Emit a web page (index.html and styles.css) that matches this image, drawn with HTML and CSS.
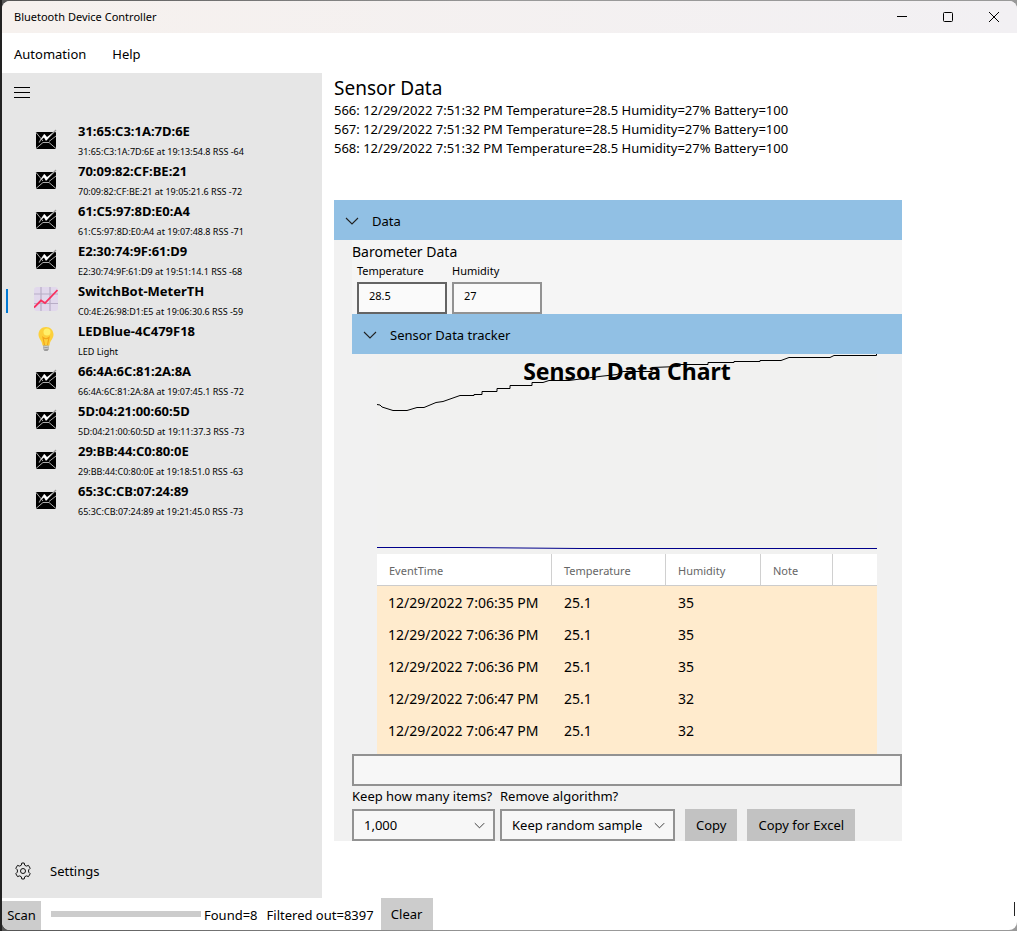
FILE: index.html
```html
<!DOCTYPE html>
<html lang="en">
<head>
<meta charset="utf-8">
<title>Bluetooth Device Controller</title>
<link rel="stylesheet" href="styles.css">
</head>
<body>
<svg class="defs" aria-hidden="true">
  <symbol id="device" viewBox="0 0 24 24">
    <rect x="2" y="5" width="20" height="17" rx="1" fill="#000"/>
    <path d="M2 5.500L9 14M22 9L15 14.500M2 21.500L9 15.500H15L22 21.500" fill="none" stroke="#aaa" stroke-width="1"/>
    <path d="M5 15.500L10 8L13 12L22 3" fill="none" stroke="#999" stroke-width="1.200"/>
    <path d="M6 13.500L10.500 7L13 10L19 5.500L12 14L10 10.500Z" fill="#fff"/>
  </symbol>
  <symbol id="chevron" viewBox="0 0 14 8"><path d="M1 1L7 7L13 1" fill="none" stroke="#222" stroke-width="1.100"/></symbol>
</svg>
<div class="window">
  <header class="titlebar">
    <span>Bluetooth Device Controller</span>
    <div class="caption">
      <button aria-label="Minimize"><svg width="12" height="12" viewBox="0 0 12 12"><path d="M1 5.500H11" stroke="#000"/></svg></button>
      <button aria-label="Maximize"><svg width="12" height="12" viewBox="0 0 12 12"><rect x="1.500" y="1.500" width="9" height="9" rx="1" fill="none" stroke="#000"/></svg></button>
      <button aria-label="Close"><svg width="12" height="12" viewBox="0 0 12 12"><path d="M1 1L11 11M11 1L1 11" stroke="#000"/></svg></button>
    </div>
  </header>
  <nav class="menubar"><button>Automation</button><button>Help</button></nav>
  <div class="workspace">
    <aside class="sidebar">
      <button class="burger" aria-label="Toggle navigation"><svg width="16" height="12" viewBox="0 0 16 12"><path d="M0 .5H16M0 5.500H16M0 10.500H16" stroke="#000"/></svg></button>
      <ul class="devices">
        <li><svg class="icon"><use href="#device"/></svg><div><strong>31:65:C3:1A:7D:6E</strong><small>31:65:C3:1A:7D:6E at 19:13:54.8 RSS -64</small></div></li>
        <li><svg class="icon"><use href="#device"/></svg><div><strong>70:09:82:CF:BE:21</strong><small>70:09:82:CF:BE:21 at 19:05:21.6 RSS -72</small></div></li>
        <li><svg class="icon"><use href="#device"/></svg><div><strong>61:C5:97:8D:E0:A4</strong><small>61:C5:97:8D:E0:A4 at 19:07:48.8 RSS -71</small></div></li>
        <li><svg class="icon"><use href="#device"/></svg><div><strong>E2:30:74:9F:61:D9</strong><small>E2:30:74:9F:61:D9 at 19:51:14.1 RSS -68</small></div></li>
        <li class="selected"><svg class="icon" viewBox="0 0 24 24"><rect width="24" height="24" rx="3" fill="#e1d8ec"/><path d="M7 0V24M16 0V24M0 7H24M0 16.500H24" stroke="#b8adc6" stroke-width="1.200"/><path d="M0 20.500L7 13.500L11 16L23.500 3" fill="none" stroke="#f8315f" stroke-width="1.800"/></svg><div><strong>SwitchBot-MeterTH</strong><small>C0:4E:26:98:D1:E5 at 19:06:30.6 RSS -59</small></div></li>
        <li><svg class="icon" viewBox="0 0 24 24"><path d="M9 18H15V22L13.500 24H10.500L9 22Z" fill="#9b9b9b"/><path d="M9 20L15 19M9 22L15 21" stroke="#ddd" stroke-width=".8"/><path d="M12 0C7.500 0 4.500 3.500 4.500 7.500C4.500 12 8 13 8.500 18.500H15.500C16 13 19.500 12 19.500 7.500C19.500 3.500 16.500 0 12 0Z" fill="#fcd03b"/><path d="M10.500 18L9 10.500Q12 13 15 10.500L13.500 18" fill="none" stroke="#f3a51b" stroke-width="1.200"/><circle cx="13" cy="5" r="3.500" fill="#fff06a"/></svg><div><strong>LEDBlue-4C479F18</strong><small>LED Light</small></div></li>
        <li><svg class="icon"><use href="#device"/></svg><div><strong>66:4A:6C:81:2A:8A</strong><small>66:4A:6C:81:2A:8A at 19:07:45.1 RSS -72</small></div></li>
        <li><svg class="icon"><use href="#device"/></svg><div><strong>5D:04:21:00:60:5D</strong><small>5D:04:21:00:60:5D at 19:11:37.3 RSS -73</small></div></li>
        <li><svg class="icon"><use href="#device"/></svg><div><strong>29:BB:44:C0:80:0E</strong><small>29:BB:44:C0:80:0E at 19:18:51.0 RSS -63</small></div></li>
        <li><svg class="icon"><use href="#device"/></svg><div><strong>65:3C:CB:07:24:89</strong><small>65:3C:CB:07:24:89 at 19:21:45.0 RSS -73</small></div></li>
      </ul>
      <button class="settings"><svg width="18" height="18" viewBox="0 0 18 18"><path d="M7.300 3.200L7.800 1H10.200L10.700 3.200L12.300 4.100L14.500 3.400L16.200 6.300L14.600 7.900V10.100L16.200 11.700L14.500 14.600L12.300 13.900L10.700 14.800L10.200 17H7.800L7.300 14.800L5.700 13.900L3.500 14.600L1.800 11.700L3.400 10.100V7.900L1.800 6.300L3.500 3.400L5.700 4.100Z" fill="none" stroke="#111" stroke-linejoin="round"/><circle cx="9" cy="9" r="2.500" fill="none" stroke="#111"/></svg>Settings</button>
    </aside>
    <main class="content">
      <h1>Sensor Data</h1>
      <div class="log">
        <p>566: 12/29/2022 7:51:32 PM Temperature=28.5 Humidity=27% Battery=100</p>
        <p>567: 12/29/2022 7:51:32 PM Temperature=28.5 Humidity=27% Battery=100</p>
        <p>568: 12/29/2022 7:51:32 PM Temperature=28.5 Humidity=27% Battery=100</p>
      </div>
      <section class="panel">
        <button class="expander"><svg class="chev"><use href="#chevron"/></svg>Data</button>
        <div class="panel-body">
          <div class="barometer">
            <h2>Barometer Data</h2>
            <div class="fields">
              <label>Temperature<input class="focus" value="28.5"></label>
              <label>Humidity<input value="27"></label>
            </div>
          </div>
          <button class="expander"><svg class="chev"><use href="#chevron"/></svg>Sensor Data tracker</button>
          <div class="tracker">
            <div class="chart">
              <h3>Sensor Data Chart</h3>
              <svg viewBox="0 0 500 200" preserveAspectRatio="none"><path d="M0 50.500L3 51L5 53L16 56.500H30L40 53.500H47L59 48.500L66 47.500L83 41.500H97V40.500H105V37.500H120V34.500H133V31.500H155V28.500H166L172 26.500H192L222 22.500L240 20.500L246 17.500H275V13.500L301 12.500L304 10.500H331V8.500H357V7.500H383V6.500H404L412 3.500H453L457 1.500H499.500V0" fill="none" stroke="#000"/><path d="M0 193.500L84 193.500L204 194.500H500" fill="none" stroke="#00008b"/></svg>
            </div>
            <div class="grid">
              <table>
                <colgroup><col class="c-time"><col class="c-temp"><col class="c-hum"><col class="c-note"><col></colgroup>
                <thead><tr><th>EventTime</th><th>Temperature</th><th>Humidity</th><th>Note</th><th></th></tr></thead>
                <tbody>
                  <tr><td>12/29/2022 7:06:35 PM</td><td>25.1</td><td>35</td><td></td><td></td></tr>
                  <tr><td>12/29/2022 7:06:36 PM</td><td>25.1</td><td>35</td><td></td><td></td></tr>
                  <tr><td>12/29/2022 7:06:36 PM</td><td>25.1</td><td>35</td><td></td><td></td></tr>
                  <tr><td>12/29/2022 7:06:47 PM</td><td>25.1</td><td>32</td><td></td><td></td></tr>
                  <tr><td>12/29/2022 7:06:47 PM</td><td>25.1</td><td>32</td><td></td><td></td></tr>
                </tbody>
              </table>
            </div>
          </div>
          <input class="note" aria-label="Note">
          <div class="options">
            <div class="option keep"><label for="keep">Keep how many items?</label><div class="combo"><select id="keep"><option>1,000</option></select><svg class="chev small"><use href="#chevron"/></svg></div></div>
            <div class="option algo"><label for="algo">Remove algorithm?</label><div class="combo"><select id="algo"><option>Keep random sample</option></select><svg class="chev small"><use href="#chevron"/></svg></div></div>
            <button class="btn">Copy</button>
            <button class="btn">Copy for Excel</button>
          </div>
        </div>
      </section>
    </main>
  </div>
  <footer class="statusbar">
    <button class="scan">Scan</button>
    <div class="progress" role="progressbar" aria-label="Scan progress"></div>
    <span class="found">Found=8</span><span>Filtered out=8397</span>
    <button class="clear">Clear</button>
    <i class="caret"></i>
  </footer>
</div>
</body>
</html>
```
FILE: styles.css
```css
* { box-sizing: border-box; }
body {
  margin: 0;
  min-height: 100vh;
  display: flex;
  padding: 1px 0 1px 2px;
  background: linear-gradient(90deg, #222 2px, #555 2px, #999 50%, #999);
  font: 14px/20px "Noto Sans", "Open Sans", sans-serif;
  color: #000;
}
button, input, select { font: inherit; color: inherit; border: 0; border-radius: 0; margin: 0; padding: 0; background: none; }
h1, h2, h3, p, ul { margin: 0; padding: 0; font-weight: 400; }
.defs { position: absolute; width: 0; height: 0; }
.window { flex: 1; min-width: 0; display: flex; flex-direction: column; background: #fff; border-radius: 8px; overflow: hidden; }
.titlebar { height: 32px; display: flex; align-items: center; justify-content: space-between; padding-left: 12px; background: linear-gradient(90deg, #f6f1ee, #f2f0f3); font-size: 11px; }
.caption { display: flex; height: 100%; }
.caption button { width: 46px; display: grid; place-items: center; }
.menubar { height: 40px; display: flex; align-items: center; gap: 26px; padding: 2px 12px 0; }
.menubar, .expander, .options, .settings, .statusbar, .log { font-size: 13px; }
.workspace { flex: 1; display: flex; }
.sidebar { width: 320px; flex: none; background: #e6e6e6; display: flex; flex-direction: column; }
.burger { height: 40px; width: 40px; display: grid; place-items: center; }
.devices { list-style: none; margin-top: 8px; flex: 1; }
.devices li { height: 40px; display: flex; padding-left: 32px; gap: 20px; position: relative; }
.devices div { display: flex; flex-direction: column; }
.devices strong { font-size: 13px; line-height: 20px; }
.devices small { font-size: 9px; line-height: 22px; }
.icon { width: 24px; height: 24px; margin-top: 6px; }
.selected::before { content: ""; position: absolute; left: 4px; top: 8px; width: 2px; height: 24px; background: #0078d4; }
.settings { height: 40px; margin-bottom: 7px; padding-left: 12px; display: flex; align-items: center; gap: 18px; }
.content { flex: 1; min-width: 0; padding: 3px 12px 0; }
h1 { font-size: 19px; line-height: 24px; }
.log { line-height: 19px; height: 100px; padding-top: 1px; }
.panel { max-width: 568px; background: #f1f1f1; }
.panel-body { padding-left: 18px; }
.expander { width: 100%; height: 40px; background: #91c0e4; display: flex; align-items: center; gap: 13px; padding: 1px 11px 0; }
.chev { width: 14px; height: 8px; }
.barometer { background: #f5f5f5; padding-top: 2px; }
h2 { font-size: 14px; line-height: 20px; }
.fields { display: flex; gap: 5px; padding-left: 5px; font-size: 11px; line-height: 18px; }
.fields label { display: flex; flex-direction: column; gap: 2px; width: 90px; }
.fields input { width: 100%; height: 32px; padding: 0 10px 6px; background: #fafafa; border: 2px solid #929292; }
.fields .focus { border-color: #646464; }
.tracker { padding: 0 25px; }
.chart { display: grid; height: 200px; background: #f1f1f0; }
.chart > * { grid-area: 1 / 1; }
.chart svg { width: 100%; height: 100%; }
h3 { font-size: 23px; line-height: 34px; font-weight: 700; text-align: center; }
.grid { height: 200px; overflow: hidden; background: #ffebcd; }
table { width: 100%; border-collapse: separate; border-spacing: 0; table-layout: fixed; }
.c-time { width: 175px; } .c-temp { width: 114px; } .c-hum { width: 95px; } .c-note { width: 72px; }
th { height: 32px; padding: 2px 12px 0; background: #fff; border-bottom: 1px solid #ccc; border-right: 1px solid #d0d0d0; font-size: 11px; font-weight: 400; text-align: left; color: #666; }
th:last-child { border-right: 0; }
td { height: 32px; padding: 2px 0 0 12px; font-size: 14px; white-space: nowrap; }
td:first-child { padding-left: 11px; }
.note { display: block; width: 100%; height: 32px; border: 2px solid #929292; background: #f7f7f7; padding: 0 10px; }
.options { display: flex; align-items: flex-end; height: 55px; white-space: nowrap; }
.option { display: flex; flex-direction: column; gap: 3px; }
.keep { width: 143px; margin-right: 5px; }
.algo { width: 175px; }
.combo { position: relative; }
.combo select { appearance: none; display: block; width: 100%; height: 32px; border: 2px solid #929292; background: #f7f7f7; padding: 0 28px 0 10px; }
.small { position: absolute; right: 10px; top: 13px; width: 11px; height: 7px; pointer-events: none; }
.btn { height: 32px; padding: 0 11px; margin-left: 10px; background: #c2c2c2; }
.statusbar { height: 32px; display: flex; align-items: center; white-space: nowrap; }
.scan { height: 29px; width: 39px; margin-top: 2px; background: #ccc; }
.progress { width: 150px; height: 6px; margin: 0 3px 0 10px; background: #ccc; }
.found { margin-right: 9px; }
.statusbar span { padding-top: 2px; }
.clear { height: 32px; width: 52px; margin-left: 7px; background: #ccc; }
.caret { width: 1px; height: 14px; margin: 0 2px 10px auto; background: #222; }
```
